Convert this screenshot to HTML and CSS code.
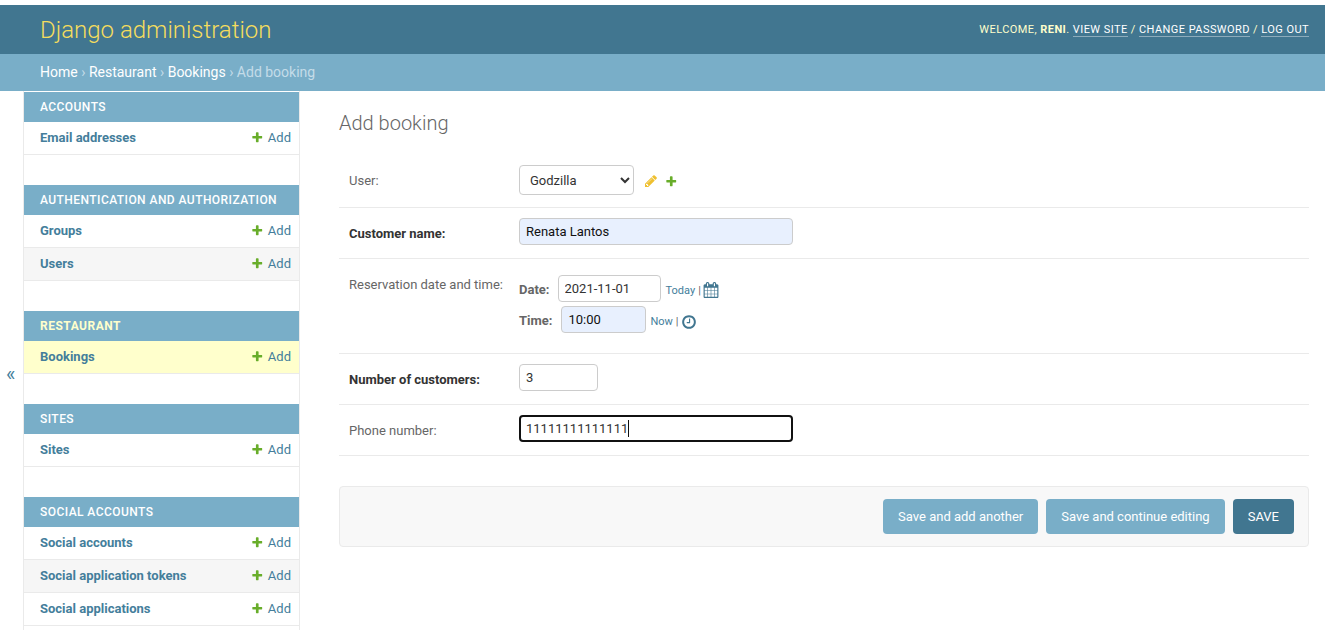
FILE: index.html
```html
<!DOCTYPE html>
<html lang="en">
<head>
<meta charset="utf-8">
<title>Add booking | Django site admin</title>
<link rel="stylesheet" href="styles.css">
</head>
<body>
<svg class="sprite" aria-hidden="true">
  <symbol id="i-add" viewBox="0 0 1792 1792"><path d="M1600 796v192q0 40-28 68t-68 28h-416v416q0 40-28 68t-68 28h-192q-40 0-68-28t-28-68v-416h-416q-40 0-68-28t-28-68v-192q0-40 28-68t68-28h416v-416q0-40 28-68t68-28h192q40 0 68 28t28 68v416h416q40 0 68 28t28 68z"/></symbol>
  <symbol id="i-change" viewBox="0 0 1792 1792"><path d="M491 1536l91-91-235-235-91 91v107h128v128h107zm523-928q0-22-22-22-10 0-17 7l-542 542q-7 7-7 17 0 22 22 22 10 0 17-7l542-542q7-7 7-17zm-54-192l416 416-832 832h-416v-416zm683 96q0 53-37 90l-166 166-416-416 166-165q36-38 90-38 53 0 91 38l235 234q37 39 37 91z"/></symbol>
  <symbol id="i-cal" viewBox="0 0 1792 1792"><path d="M192 1664h288v-288h-288v288zm352 0h320v-288h-320v288zm-352-352h288v-320h-288v320zm352 0h320v-320h-320v320zm-352-384h288v-288h-288v288zm736 736h320v-288h-320v288zm-384-736h320v-288h-320v288zm768 736h288v-288h-288v288zm-384-352h320v-320h-320v320zm-352-864v-288q0-13-9.500-22.500t-22.500-9.500h-64q-13 0-22.500 9.500t-9.500 22.500v288q0 13 9.500 22.500t22.500 9.500h64q13 0 22.500-9.500t9.500-22.500zm736 864h288v-320h-288v320zm-384-384h320v-288h-320v288zm384 0h288v-288h-288v288zm32-480v-288q0-13-9.500-22.500t-22.500-9.500h-64q-13 0-22.500 9.500t-9.500 22.500v288q0 13 9.500 22.500t22.500 9.500h64q13 0 22.500-9.500t9.500-22.500zm384-64v1280q0 52-38 90t-90 38h-1408q-52 0-90-38t-38-90v-1280q0-52 38-90t90-38h128v-96q0-66 47-113t113-47h64q66 0 113 47t47 113v96h384v-96q0-66 47-113t113-47h64q66 0 113 47t47 113v96h128q52 0 90 38t38 90z"/></symbol>
  <symbol id="i-clock" viewBox="0 0 1792 1792"><path d="M1024 544v448q0 14-9 23t-23 9h-320q-14 0-23-9t-9-23v-64q0-14 9-23t23-9h224v-352q0-14 9-23t23-9h64q14 0 23 9t9 23zm416 352q0-148-73-273t-198-198-273-73-273 73-198 198-73 273 73 273 198 198 273 73 273-73 198-198 73-273zm224 0q0 209-103 385.500t-279.500 279.500-385.500 103-385.500-103-279.500-279.500-103-385.500 103-385.500 279.500-279.500 385.500-103 385.500 103 279.500 279.500 103 385.500z"/></symbol>
</svg>

<header class="header">
  <div class="brand">Django administration</div>
  <div class="usertools">Welcome, <strong>reni</strong>. <a href="#">View site</a> / <a href="#">Change password</a> / <a href="#">Log out</a></div>
</header>
<nav class="breadcrumbs"><a href="#">Home</a> <span class="sep">›</span> <a href="#">Restaurant</a> <span class="sep">›</span> <a href="#">Bookings</a> <span class="sep">›</span> Add booking</nav>

<div class="main">
  <button class="toggle" type="button">«</button>
  <aside class="sidebar">
    <section class="module">
      <h2 class="caption">Accounts</h2>
      <div class="row"><a class="name" href="#">Email addresses</a><a class="add" href="#"><svg class="icon-add"><use href="#i-add"/></svg>Add</a></div>
    </section>
    <section class="module">
      <h2 class="caption">Authentication and Authorization</h2>
      <div class="row"><a class="name" href="#">Groups</a><a class="add" href="#"><svg class="icon-add"><use href="#i-add"/></svg>Add</a></div>
      <div class="row alt"><a class="name" href="#">Users</a><a class="add" href="#"><svg class="icon-add"><use href="#i-add"/></svg>Add</a></div>
    </section>
    <section class="module">
      <h2 class="caption current">Restaurant</h2>
      <div class="row selected"><a class="name" href="#">Bookings</a><a class="add" href="#"><svg class="icon-add"><use href="#i-add"/></svg>Add</a></div>
    </section>
    <section class="module">
      <h2 class="caption">Sites</h2>
      <div class="row"><a class="name" href="#">Sites</a><a class="add" href="#"><svg class="icon-add"><use href="#i-add"/></svg>Add</a></div>
    </section>
    <section class="module">
      <h2 class="caption">Social Accounts</h2>
      <div class="row"><a class="name" href="#">Social accounts</a><a class="add" href="#"><svg class="icon-add"><use href="#i-add"/></svg>Add</a></div>
      <div class="row alt"><a class="name" href="#">Social application tokens</a><a class="add" href="#"><svg class="icon-add"><use href="#i-add"/></svg>Add</a></div>
      <div class="row"><a class="name" href="#">Social applications</a><a class="add" href="#"><svg class="icon-add"><use href="#i-add"/></svg>Add</a></div>
    </section>
  </aside>

  <main class="content">
    <h1 class="title">Add booking</h1>
    <form class="form">
      <div class="field">
        <label class="label" for="user">User:</label>
        <div class="control user-control">
          <select class="select" id="user"><option>Godzilla</option></select>
          <a class="rel" href="#"><svg class="icon-change"><use href="#i-change"/></svg></a>
          <a class="rel" href="#"><svg class="icon-add"><use href="#i-add"/></svg></a>
        </div>
      </div>
      <div class="field">
        <label class="label required" for="cname">Customer name:</label>
        <div class="control"><input class="input wide autofilled" id="cname" type="text" value="Renata Lantos"></div>
      </div>
      <div class="field">
        <span class="label">Reservation date and time:</span>
        <div class="control datetime">
          <div class="dt-line">
            <label class="dt-label" for="d">Date:</label>
            <input class="input date" id="d" type="text" value="2021-11-01">
            <span class="shortcuts"><a href="#">Today</a> | <a class="cal" href="#"><svg class="icon-cal"><use href="#i-cal"/></svg></a></span>
          </div>
          <div class="dt-line">
            <label class="dt-label" for="t">Time:</label>
            <input class="input time autofilled" id="t" type="text" value="10:00">
            <span class="shortcuts"><a href="#">Now</a> | <a class="cal" href="#"><svg class="icon-clock"><use href="#i-clock"/></svg></a></span>
          </div>
        </div>
      </div>
      <div class="field">
        <label class="label required" for="n">Number of customers:</label>
        <div class="control"><input class="input number" id="n" type="text" value="3"></div>
      </div>
      <div class="field">
        <label class="label" for="p">Phone number:</label>
        <div class="control">
          <div class="caret-wrap">
            <input class="input wide focused" id="p" type="text" value="11111111111111">
            <span class="caret"></span>
          </div>
        </div>
      </div>
      <div class="submit-row">
        <button class="btn" type="button">Save and add another</button>
        <button class="btn" type="button">Save and continue editing</button>
        <button class="btn default" type="button">SAVE</button>
      </div>
    </form>
  </main>
</div>
</body>
</html>
```

FILE: styles.css
```css
* { box-sizing: border-box; }
html, body { height: 100%; }
body {
  margin: 0;
  padding-top: 5px;
  height: 630px;
  overflow: hidden;
  display: flex;
  flex-direction: column;
  font-family: Roboto, "Liberation Sans", sans-serif;
  font-size: 14px;
  color: #333;
  background: #fff;
}
a { text-decoration: none; color: #447e9b; }
.sprite { display: none; }

.header {
  flex: none;
  height: 49px;
  padding: 0 16px 0 40px;
  display: flex;
  align-items: center;
  justify-content: space-between;
  background: #417690;
  color: #ffc;
}
.brand { font-size: 24px; font-weight: 300; color: #f5dd5d; }
.usertools {
  font-size: 11px;
  letter-spacing: 0.44px;
  text-transform: uppercase;
  color: #ffc;
  font-weight: 400;
}
.usertools strong { font-weight: 700; }
.usertools a { color: #fff; border-bottom: 1px solid rgba(255, 255, 255, 0.4); }

.breadcrumbs {
  flex: none;
  height: 37px;
  padding: 0 40px;
  line-height: 37px;
  font-size: 14px;
  font-weight: 400;
  background: #79aec8;
  color: #c4dce8;
}
.breadcrumbs a { color: #fff; font-weight: 400; }

.main { flex: 1; min-height: 0; display: flex; }

.toggle {
  flex: none;
  width: 24px;
  padding: 26px 0 0;
  border: 0;
  border-right: 1px solid #eaeaea;
  background: #fff;
  color: #447e9b;
  font-family: inherit;
  font-size: 20px;
  text-align: left;
  text-indent: 6px;
}

.sidebar {
  flex: none;
  width: 276px;
  padding-top: 1px;
  border-right: 1px solid #eaeaea;
  overflow: hidden;
}
.module { margin-bottom: 30px; }
.caption {
  margin: 0;
  height: 30px;
  padding: 0 16px;
  line-height: 30px;
  background: #79aec8;
  color: #fff;
  font-size: 12px;
  font-weight: 500;
  letter-spacing: 0.44px;
  text-transform: uppercase;
  white-space: nowrap;
}
.caption.current { color: #ffc; font-weight: 700; letter-spacing: 0.5px; }
.row {
  height: 33px;
  padding: 0 8px 2px 16px;
  display: flex;
  align-items: center;
  justify-content: space-between;
  border-bottom: 1px solid #eaeaea;
  background: #fff;
  font-size: 13px;
}
.row.alt { background: #f6f6f6; }
.row.selected { background: #ffc; }
.name { font-weight: 700; }
.add { display: flex; align-items: center; gap: 4px; color: #447e9b; }
.icon-add { display: block; width: 12.5px; height: 12.5px; fill: #68ad2a; }
.icon-change { display: block; width: 14px; height: 14px; fill: #efc030; }
.icon-cal { display: block; width: 16px; height: 16px; fill: #417690; }
.icon-clock { display: block; width: 16px; height: 16px; fill: #417690; }

.content {
  flex: 1;
  min-width: 0;
  padding: 20px 16px 0 39px;
}
.title {
  margin: 0 0 20px;
  font-size: 20px;
  line-height: 24px;
  font-weight: 300;
  color: #666;
}
.field {
  display: flex;
  align-items: flex-start;
  padding: 10px;
  border-bottom: 1px solid #eaeaea;
}
.label {
  flex: none;
  width: 170px;
  padding-top: 8px;
  line-height: 16px;
  font-size: 13px;
  color: #666;
}
.label.required { font-weight: 700; color: #333; }
.control { min-height: 30px; }
.user-control { display: flex; align-items: flex-start; height: 32px; }
.select {
  width: 115px;
  height: 30px;
  padding: 0 6px;
  border: 1px solid #ccc;
  border-radius: 4px;
  background: #fff;
  color: #333;
  font-family: inherit;
  font-size: 13px;
}
.rel { display: block; }
.rel .icon-change { margin: 9px 0 0 10px; }
.rel .icon-add { margin: 10px 0 0 6.500px; }

.input {
  display: block;
  height: 27px;
  padding: 5px 6px;
  border: 1px solid #ccc;
  border-radius: 4px;
  background: #fff;
  color: #333;
  font-family: inherit;
  font-size: 13px;
  outline: 0;
}
.input.autofilled { background: #e8f0fe; color: #111; }
.input.wide { width: 274px; }
.input.number { width: 79px; }
.input.date { width: 103px; }
.input.time { width: 85px; }
.input.focused { border: 2px solid #111; padding: 4px 5px; }

.caret-wrap { position: relative; }
.caret {
  position: absolute;
  left: 109px;
  top: 5px;
  width: 1px;
  height: 17px;
  background: #111;
}

.datetime { padding: 6px 0 10px; display: flex; flex-direction: column; gap: 4px; }
.dt-line { display: flex; align-items: center; }
.dt-label { font-size: 13px; font-weight: 700; color: #666; margin-right: 8px; padding-top: 2px; }
.dt-line + .dt-line .dt-label { margin-right: 9px; }
.shortcuts {
  display: flex;
  align-items: center;
  gap: 3px;
  margin-left: 5px;
  padding-top: 4px;
  font-size: 11px;
  color: #666;
}
.dt-line + .dt-line .shortcuts { margin-left: 4px; }
.shortcuts .cal { margin: -2px 0 0 -1px; }
.dt-line + .dt-line .cal { margin-top: 0; }

.submit-row {
  margin-top: 30px;
  padding: 12px 14px;
  display: flex;
  justify-content: flex-end;
  gap: 8px;
  background: #f8f8f8;
  border: 1px solid #eaeaea;
  border-radius: 4px;
}
.btn {
  height: 35px;
  padding: 0 15px;
  border: 0;
  border-radius: 4px;
  background: #79aec8;
  color: #fff;
  font-family: inherit;
  font-size: 13px;
}
.btn.default { background: #417690; }
```
